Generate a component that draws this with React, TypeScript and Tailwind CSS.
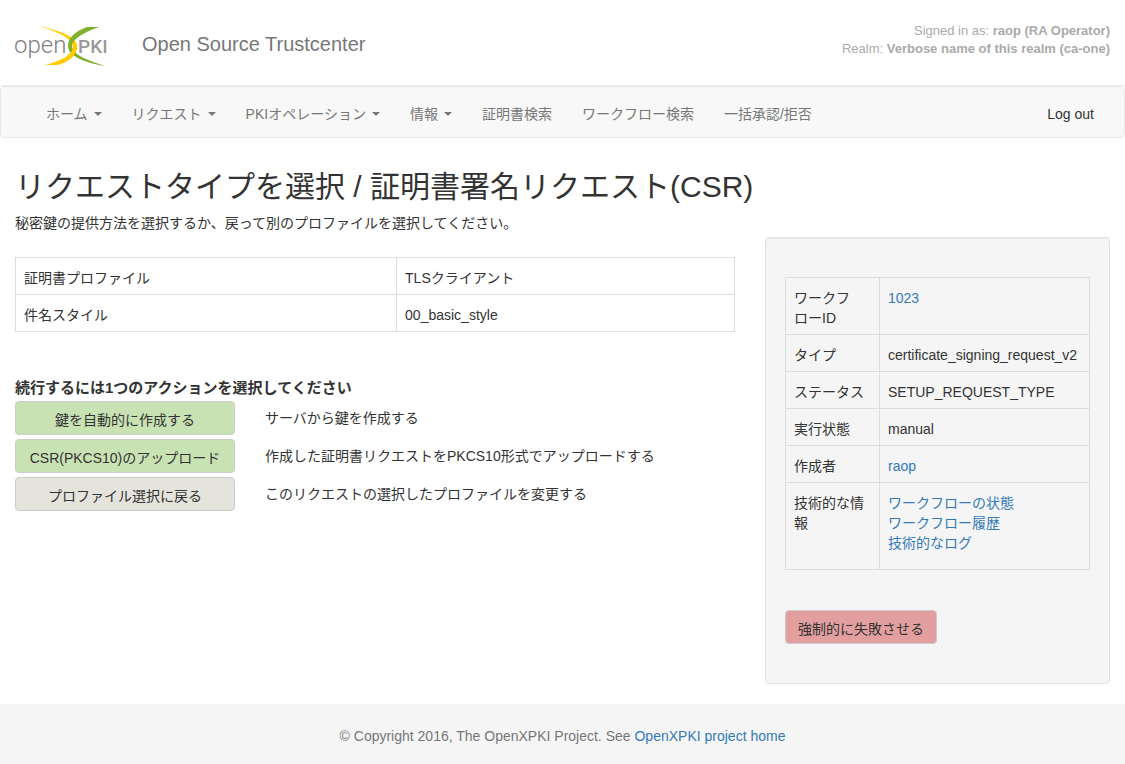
import type { ReactNode } from 'react'

const navItems = [
  { label: 'ホーム', dropdown: true },
  { label: 'リクエスト', dropdown: true },
  { label: 'PKIオペレーション', dropdown: true },
  { label: '情報', dropdown: true },
  { label: '証明書検索', dropdown: false },
  { label: 'ワークフロー検索', dropdown: false },
  { label: '一括承認/拒否', dropdown: false },
]

const profileRows = [
  ['証明書プロファイル', 'TLSクライアント'],
  ['件名スタイル', '00_basic_style'],
]

const actions = [
  { label: '鍵を自動的に作成する', hint: 'サーバから鍵を作成する', color: 'bg-[#c9e2b3]' },
  {
    label: 'CSR(PKCS10)のアップロード',
    hint: '作成した証明書リクエストをPKCS10形式でアップロードする',
    color: 'bg-[#c9e2b3]',
  },
  {
    label: 'プロファイル選択に戻る',
    hint: 'このリクエストの選択したプロファイルを変更する',
    color: 'bg-[#e4e4dc]',
  },
]

function Logo() {
  return (
    <svg width="92" height="42" viewBox="0 0 92 42" role="img" aria-label="openXPKI">
      <text x="-1" y="28" fontFamily="Roboto, sans-serif" fontSize="24" fontWeight="300" fill="#808080">open</text>
      <text x="63" y="28" fontFamily="Roboto, sans-serif" fontSize="19" fontWeight="500" fill="#999">PKI</text>
      <path d="M24 1C42 5 62 11 62 21C62 32 49 40 40 40H29C44 37 58 30 58 22C58 14 44 7 24 1Z" fill="#fc0" />
      <path d="M84 2H72C60 6 53 13 53 21C53 32 72 38 90 41C75 36 57 30 57 21C57 14 70 7 84 2Z" fill="#82b02c" />
      <path d="M58 22H62C62 27 58 32 54 35L52 31C56 28 58 25 58 22Z" fill="#fc0" />
    </svg>
  )
}

function Link({ children }: { children: ReactNode }) {
  return <a href="#" className="text-[#337ab7] hover:underline">{children}</a>
}

function InfoRow({ label, children }: { label: string; children: ReactNode }) {
  return (
    <tr>
      <th scope="row" className="w-[94px] border border-[#ddd] px-2 pt-[10px] pb-[6px] text-left align-top font-normal [line-break:strict]">{label}</th>
      <td className="border border-[#ddd] px-2 pt-[10px] pb-[6px] align-top">{children}</td>
    </tr>
  )
}

export default function App() {
  return (
    <div className="bg-white font-['Liberation_Sans','Noto_Sans_CJK_JP',sans-serif] text-[14px] leading-5 text-[#333]" lang="ja">
      <header className="flex h-[86px] items-start justify-between border-b border-[#eee] px-[15px]">
        <div className="flex items-center gap-[35px] pt-[25px]">
          <Logo />
          <span className="pb-1 text-[20px] leading-7 text-[#777]">Open Source Trustcenter</span>
        </div>
        <div className="pt-[22px] text-right text-[13px] leading-[18px] text-[#aaa]">
          <p>Signed in as: <b>raop (RA Operator)</b></p>
          <p>Realm: <b>Verbose name of this realm (ca-one)</b></p>
        </div>
      </header>

      <nav className="flex items-center justify-between rounded border border-[#e7e7e7] bg-[#f8f8f8] pt-[17px] pb-[13px] pr-[15px] pl-[30px]">
        <ul className="flex">
          {navItems.map(item => (
            <li key={item.label}>
              <a href="#" className="flex items-center px-[15px] text-[#777] hover:text-[#333]">
                {item.label}
                {item.dropdown && (
                  <span className="ml-[6px] border-x-4 border-t-4 border-x-transparent border-t-[#777]" />
                )}
              </a>
            </li>
          ))}
        </ul>
        <a href="#" className="px-[15px]">Log out</a>
      </nav>

      <main className="px-[15px] pt-8">
        <h1 className="text-[30px] leading-[33px]">リクエストタイプを選択 / 証明書署名リクエスト(CSR)</h1>
        <p className="pt-[10px]">秘密鍵の提供方法を選択するか、戻って別のプロファイルを選択してください。</p>

        <div className="mt-1 grid grid-cols-[minmax(0,720fr)_minmax(0,345fr)] items-start gap-[30px]">
          <section className="pt-5">
            <table className="w-full border-collapse">
              <tbody>
                {profileRows.map(([label, value]) => (
                  <tr key={label}>
                    <th scope="row" className="w-[53%] border border-[#ddd] px-2 pt-[10px] pb-[6px] text-left font-normal">{label}</th>
                    <td className="border border-[#ddd] px-2 pt-[10px] pb-[6px]">{value}</td>
                  </tr>
                ))}
              </tbody>
            </table>

            <h2 className="mt-[46px] text-[15px] font-bold">続行するには1つのアクションを選択してください</h2>
            <div className="mt-[3px] flex flex-col gap-1">
              {actions.map(action => (
                <div key={action.label} className="flex items-center gap-[30px]">
                  <button
                    type="button"
                    className={`h-[34px] w-[220px] rounded border border-[#ccc] pt-[3px] hover:brightness-95 ${action.color}`}
                  >
                    {action.label}
                  </button>
                  <p>{action.hint}</p>
                </div>
              ))}
            </div>
          </section>

          <aside className="rounded border border-[#e3e3e3] bg-[#f5f5f5] px-[19px] py-[39px] shadow-[inset_0_1px_1px_rgba(0,0,0,0.05)]">
            <table className="w-full border-collapse">
              <tbody>
                <InfoRow label="ワークフローID"><Link>1023</Link></InfoRow>
                <InfoRow label="タイプ">certificate_signing_request_v2</InfoRow>
                <InfoRow label="ステータス">SETUP_REQUEST_TYPE</InfoRow>
                <InfoRow label="実行状態">manual</InfoRow>
                <InfoRow label="作成者"><Link>raop</Link></InfoRow>
                <InfoRow label="技術的な情報">
                  <ul className="mb-[10px]">
                    <li><Link>ワークフローの状態</Link></li>
                    <li><Link>ワークフロー履歴</Link></li>
                    <li><Link>技術的なログ</Link></li>
                  </ul>
                </InfoRow>
              </tbody>
            </table>
            <button type="button" className="mt-10 h-[34px] rounded border border-[#ccc] bg-[#e39f9f] px-3 pt-[3px] hover:brightness-95">
              強制的に失敗させる
            </button>
          </aside>
        </div>
      </main>

      <footer className="mt-5 bg-[#f5f5f5] pt-[22px] pb-[18px] text-center text-[#777]">
        © Copyright 2016, The OpenXPKI Project. See <Link>OpenXPKI project home</Link>
      </footer>
    </div>
  )
}
